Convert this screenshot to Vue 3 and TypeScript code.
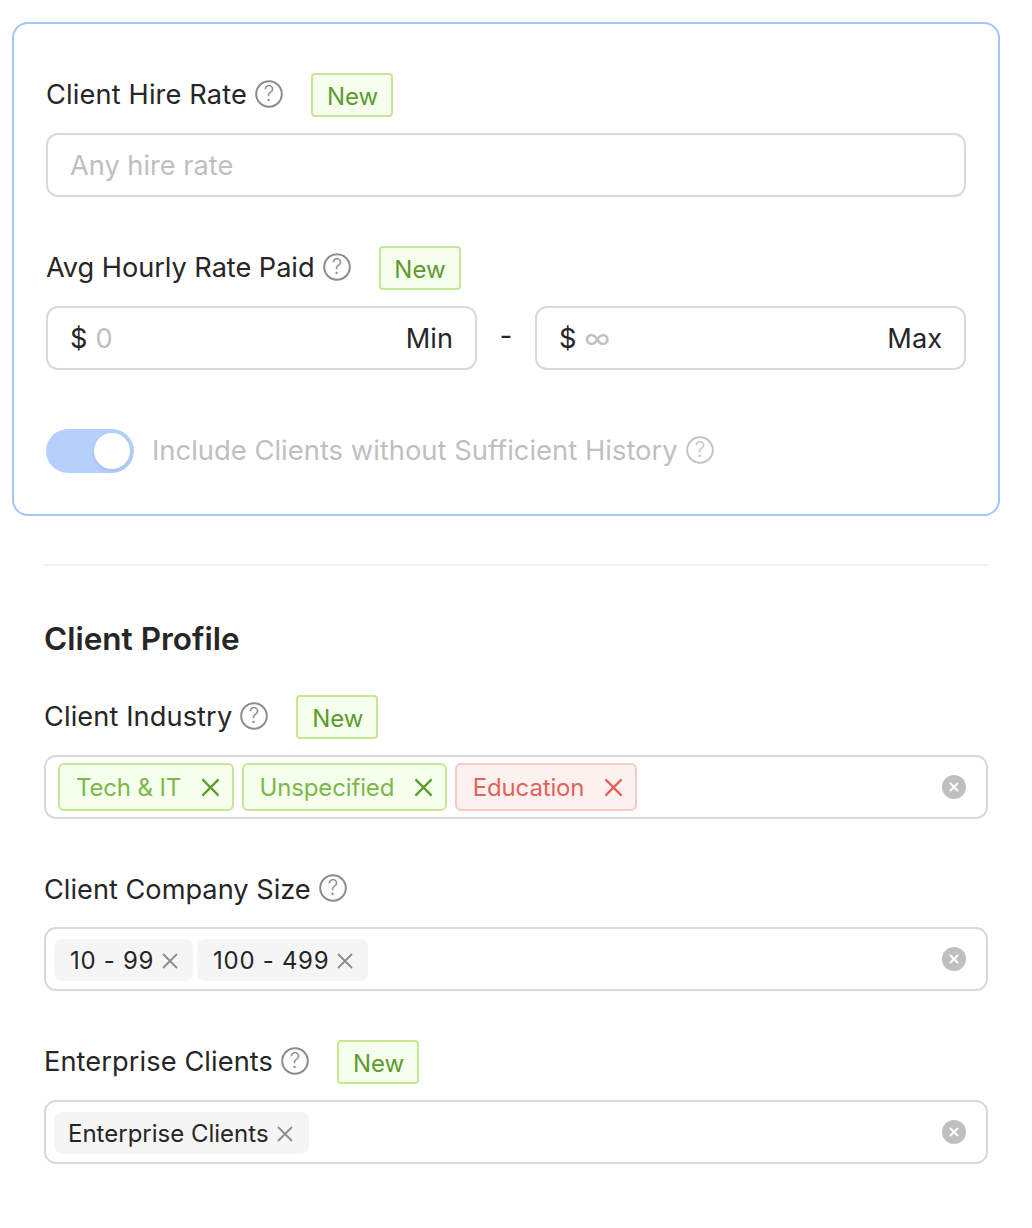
<script setup lang="ts">
interface Tag { text: string; kind: 'ok' | 'bad' }
const industry: Tag[] = [
  { text: 'Tech & IT', kind: 'ok' },
  { text: 'Unspecified', kind: 'ok' },
  { text: 'Education', kind: 'bad' },
]
const sizes = ['10 - 99', '100 - 499']
</script>

<template>
  <div class="page">
    <section class="panel">
      <div class="label-row">
        <span class="label wide">Client Hire Rate</span>
        <svg class="help" viewBox="0 0 28 28"><circle cx="14" cy="14" r="12.8" /><text x="14" y="21" text-anchor="middle">?</text></svg>
        <span class="badge">New</span>
      </div>
      <div class="box"><span class="ph">Any hire rate</span></div>

      <div class="label-row second">
        <span class="label tight">Avg Hourly Rate Paid</span>
        <svg class="help" viewBox="0 0 28 28"><circle cx="14" cy="14" r="12.8" /><text x="14" y="21" text-anchor="middle">?</text></svg>
        <span class="badge">New</span>
      </div>
      <div class="range">
        <div class="box cell"><span class="cur">$</span><span class="ph">0</span><span class="suffix">Min</span></div>
        <span class="dash">-</span>
        <div class="box cell"><span class="cur">$</span><span class="ph">∞</span><span class="suffix">Max</span></div>
      </div>

      <div class="toggle-row">
        <span class="toggle"><span class="knob"></span></span>
        <span class="toggle-text">Include Clients without Sufficient History</span>
        <svg class="help faded" viewBox="0 0 28 28"><circle cx="14" cy="14" r="12.8" /><text x="14" y="21" text-anchor="middle">?</text></svg>
      </div>
    </section>

    <section class="profile">
      <hr class="divider" />
      <h2 class="title">Client Profile</h2>

      <div class="label-row">
        <span class="label snug">Client Industry</span>
        <svg class="help" viewBox="0 0 28 28"><circle cx="14" cy="14" r="12.8" /><text x="14" y="21" text-anchor="middle">?</text></svg>
        <span class="badge">New</span>
      </div>
      <div class="box select colored">
        <span v-for="t in industry" :key="t.text" class="tag" :class="t.kind">
          {{ t.text }}
          <svg class="tag-x" viewBox="0 0 20 20"><path d="M1.5 1.5 18.5 18.5M18.5 1.5 1.5 18.5" /></svg>
        </span>
        <svg class="clear" viewBox="0 0 24 24"><circle cx="12" cy="12" r="12" /><path d="M8 8 16 16M16 8 8 16" /></svg>
      </div>

      <div class="label-row second">
        <span class="label plain">Client Company Size</span>
        <svg class="help" viewBox="0 0 28 28"><circle cx="14" cy="14" r="12.8" /><text x="14" y="21" text-anchor="middle">?</text></svg>
      </div>
      <div class="box select">
        <span v-for="s in sizes" :key="s" class="chip num">
          {{ s }}
          <svg class="chip-x" viewBox="0 0 16 16"><path d="M1 1 15 15M15 1 1 15" /></svg>
        </span>
        <svg class="clear" viewBox="0 0 24 24"><circle cx="12" cy="12" r="12" /><path d="M8 8 16 16M16 8 8 16" /></svg>
      </div>

      <div class="label-row third">
        <span class="label snug">Enterprise Clients</span>
        <svg class="help" viewBox="0 0 28 28"><circle cx="14" cy="14" r="12.8" /><text x="14" y="21" text-anchor="middle">?</text></svg>
        <span class="badge">New</span>
      </div>
      <div class="box select">
        <span class="chip">
          Enterprise Clients
          <svg class="chip-x" viewBox="0 0 16 16"><path d="M1 1 15 15M15 1 1 15" /></svg>
        </span>
        <svg class="clear" viewBox="0 0 24 24"><circle cx="12" cy="12" r="12" /><path d="M8 8 16 16M16 8 8 16" /></svg>
      </div>
    </section>
  </div>
</template>

<style scoped>
.page {
  width: 1032px;
  height: 1228px;
  box-sizing: border-box;
  padding: 22px 32px 0 12px;
  background: #fff;
  font-family: Inter, "Liberation Sans", sans-serif;
  font-size: 27.2px;
  color: #262626;
  overflow: hidden;
}
.panel {
  box-sizing: border-box;
  height: 494px;
  border: 2px solid #a3c6f8;
  border-radius: 16px;
  padding: 49px 32px 0;
}
.label-row {
  display: flex;
  align-items: center;
  height: 44px;
  margin-bottom: 16px;
}
.label-row.second { margin-top: 49px; }
.label-row.third { margin-top: 49px; }
.profile .label-row.second { margin-top: 48px; }
.label { line-height: 44px; margin-top: -1px; }
.label.plain { margin-top: 1px; }
.label.wide { letter-spacing: 0.15px; }
.label.snug { letter-spacing: 0.1px; }
.label.tight { letter-spacing: -0.05px; }
.help {
  width: 28px;
  height: 28px;
  margin-left: 8px;
  margin-top: -2px;
  flex: none;
}
.help circle { fill: none; stroke: #8c8c8c; stroke-width: 2; }
.help text { font-size: 21px; fill: #8c8c8c; font-family: Inter, sans-serif; font-weight: 300; }
.help.faded circle { stroke: #c4c4c4; }
.help.faded text { fill: #c4c4c4; }
.badge {
  box-sizing: border-box;
  width: 82px;
  height: 44px;
  margin-left: 28px;
  padding: 2px 0 0 1px;
  display: flex;
  align-items: center;
  justify-content: center;
  background: #f6ffed;
  border: 2px solid #c6e790;
  border-radius: 4px;
  color: #609a30;
  font-size: 24px;
}
.box {
  box-sizing: border-box;
  height: 64px;
  border: 2px solid #d9d9d9;
  border-radius: 12px;
  display: flex;
  align-items: center;
  padding: 0 22px;
  background: #fff;
}
.ph { color: #bfbfbf; }
.range { display: flex; align-items: center; }
.cell { width: 431px; flex: none; }
.cur { margin-right: 8px; }
.suffix { margin-left: auto; }
.dash { width: 58px; text-align: center; margin-top: -6px; }
.toggle-row {
  display: flex;
  align-items: center;
  height: 44px;
  margin-top: 59px;
}
.toggle {
  width: 88px;
  height: 44px;
  border-radius: 22px;
  background: #b5d0fb;
  position: relative;
  flex: none;
}
.knob {
  position: absolute;
  top: 4px;
  right: 4px;
  width: 36px;
  height: 36px;
  border-radius: 50%;
  background: #fff;
  box-shadow: 0 2px 4px rgba(0, 35, 11, 0.1);
}
.toggle-text { margin-left: 18px; color: #bfbfbf; margin-top: -2px; font-size: 27.4px; }
.profile { margin: 48px 12px 0 32px; }
.divider {
  height: 2px;
  margin: 0;
  border: 0;
  background: #f0f0f0;
}
.title {
  margin: 53px 0 36px;
  font-size: 31.5px;
  line-height: 40px;
  font-weight: 600;
}
.select { padding: 0 20px 0 8px; gap: 4px; position: relative; }
.select.colored { padding-left: 12px; gap: 8px; }
.tag {
  box-sizing: border-box;
  height: 48px;
  display: inline-flex;
  align-items: center;
  padding: 0 12px 0 16px;
  border-radius: 6px;
  border: 2px solid;
  font-size: 24px;
  letter-spacing: -0.15px;
  gap: 19.5px;
}
.tag.ok { background: #f6ffed; border-color: #c6e790; color: #7cb84a; }
.tag.bad { background: #fdf1f0; border-color: #f3cac6; color: #e2635a; }
.tag-x { width: 19px; height: 19px; fill: none; stroke-width: 2.4; }
.tag.ok .tag-x { stroke: #5c9c2c; }
.tag.bad .tag-x { stroke: #e2635a; }
.chip {
  height: 42px;
  margin-top: 2px;
  display: inline-flex;
  align-items: center;
  padding: 0 16px 0 14px;
  gap: 8px;
  border-radius: 8px;
  background: #f5f5f5;
  font-size: 24px;
}
.chip.num { padding: 0 15px 0 16px; letter-spacing: 0.7px; }
.chip-x { width: 16px; height: 16px; fill: none; stroke: #8c8c8c; stroke-width: 1.8; margin-top: 2px; }
.clear {
  width: 24px;
  height: 24px;
  margin-left: auto;
  flex: none;
}
.clear circle { fill: #bfbfbf; }
.clear path { stroke: #fff; stroke-width: 2; fill: none; }
</style>
